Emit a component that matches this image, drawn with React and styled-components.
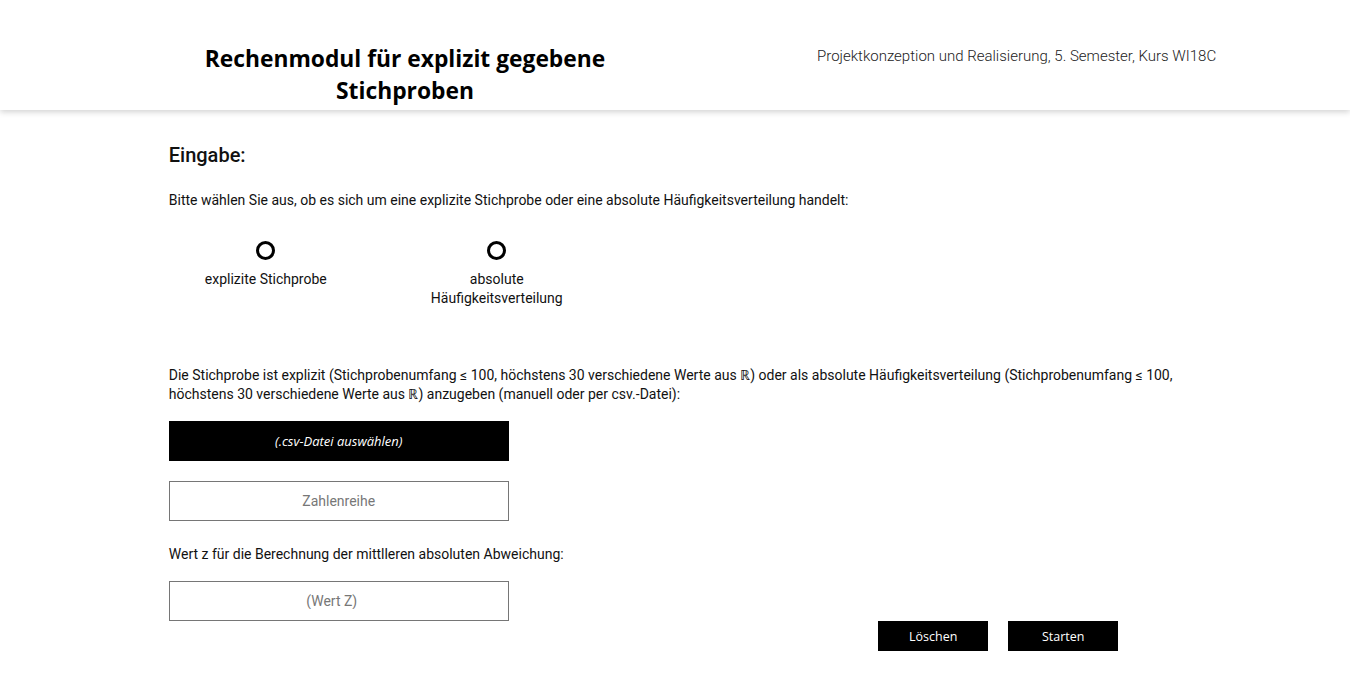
import React, { useState } from 'react'
import styled, { createGlobalStyle } from 'styled-components'

const GlobalStyle = createGlobalStyle`
  body {
    margin: 0;
    background: #fff;
    font-family: Roboto, 'Liberation Sans', sans-serif;
    color: #111;
  }
`

const Header = styled.header`
  height: 110px;
  display: grid;
  grid-template-columns: 60% 40%;
  box-shadow: 0 2px 6px rgba(0, 0, 0, 0.18);
`

const Title = styled.h1`
  margin: 43px auto 0;
  width: 430px;
  text-align: center;
  font-family: 'Open Sans', sans-serif;
  font-weight: 700;
  font-size: 22.8px;
  line-height: 32px;
  color: #000;
`

const Course = styled.div`
  padding: 47px 0 0 7px;
  font-weight: 300;
  font-size: 15px;
  line-height: 18px;
  color: #222;
`

const Main = styled.main`
  width: 75%;
  margin: 0 auto;
  padding-top: 33px;
`

const Heading = styled.h2`
  margin: 0;
  font-size: 20px;
  font-weight: 500;
  line-height: 24px;
`

const Text = styled.p`
  margin: ${(p) => p.$mt || 0}px 0 0;
  font-size: 14px;
  line-height: 19px;
`

const RadioRow = styled.div`
  display: flex;
  gap: 61px;
  margin: 31px 0 0 12px;
`

const RadioOption = styled.label`
  width: 170px;
  display: flex;
  flex-direction: column;
  align-items: center;
  text-align: center;
  font-size: 14px;
  line-height: 19px;
  cursor: pointer;
`

const Circle = styled.span`
  box-sizing: border-box;
  width: 19px;
  height: 19px;
  border: 3px solid #000;
  border-radius: 50%;
  margin-bottom: 10px;
  background: ${(p) => (p.$checked ? 'radial-gradient(#000 35%, #fff 40%)' : '#fff')};
`

const CsvButton = styled.button`
  display: block;
  width: 340px;
  height: 40px;
  margin-top: 17px;
  border: 0;
  background: #000;
  color: #fff;
  font-family: 'Open Sans', sans-serif;
  font-style: italic;
  font-size: 13px;
`

const Field = styled.input`
  display: block;
  box-sizing: border-box;
  width: 340px;
  height: 40px;
  margin-top: ${(p) => p.$mt}px;
  padding: 0 ${(p) => (p.$spin ? 15 : 1)}px 0 1px;
  border: 1px solid #767676;
  text-align: center;
  font-family: Roboto, sans-serif;
  font-size: 14px;
  &::placeholder {
    color: #777;
  }
`

const Actions = styled.div`
  display: flex;
  justify-content: flex-end;
  gap: 20px;
  padding-right: 63px;
`

const ActionButton = styled.button`
  width: 110px;
  height: 30px;
  border: 0;
  background: #000;
  color: #fff;
  font-family: 'Open Sans', sans-serif;
  font-size: 12.5px;
`

export default function App() {
  const [mode, setMode] = useState(null)

  return (
    <>
      <GlobalStyle />
      <Header>
        <Title>Rechenmodul für explizit gegebene Stichproben</Title>
        <Course>Projektkonzeption und Realisierung, 5. Semester, Kurs WI18C</Course>
      </Header>
      <Main>
        <Heading>Eingabe:</Heading>
        <Text $mt={24}>
          Bitte wählen Sie aus, ob es sich um eine explizite Stichprobe oder eine absolute
          Häufigkeitsverteilung handelt:
        </Text>
        <RadioRow>
          <RadioOption onClick={() => setMode('explizit')}>
            <Circle $checked={mode === 'explizit'} />
            explizite Stichprobe
          </RadioOption>
          <RadioOption onClick={() => setMode('absolut')}>
            <Circle $checked={mode === 'absolut'} />
            absolute Häufigkeitsverteilung
          </RadioOption>
        </RadioRow>
        <Text $mt={58}>
          Die Stichprobe ist explizit (Stichprobenumfang ≤ 100, höchstens 30 verschiedene Werte
          aus ℝ) oder als absolute Häufigkeitsverteilung (Stichprobenumfang ≤ 100, höchstens 30
          verschiedene Werte aus ℝ) anzugeben (manuell oder per csv.-Datei):
        </Text>
        <CsvButton>(.csv-Datei auswählen)</CsvButton>
        <Field $mt={20} placeholder='Zahlenreihe' />
        <Text $mt={24}>Wert z für die Berechnung der mittlleren absoluten Abweichung:</Text>
        <Field $mt={17} $spin placeholder='(Wert Z)' />
        <Actions>
          <ActionButton>Löschen</ActionButton>
          <ActionButton>Starten</ActionButton>
        </Actions>
      </Main>
    </>
  )
}
